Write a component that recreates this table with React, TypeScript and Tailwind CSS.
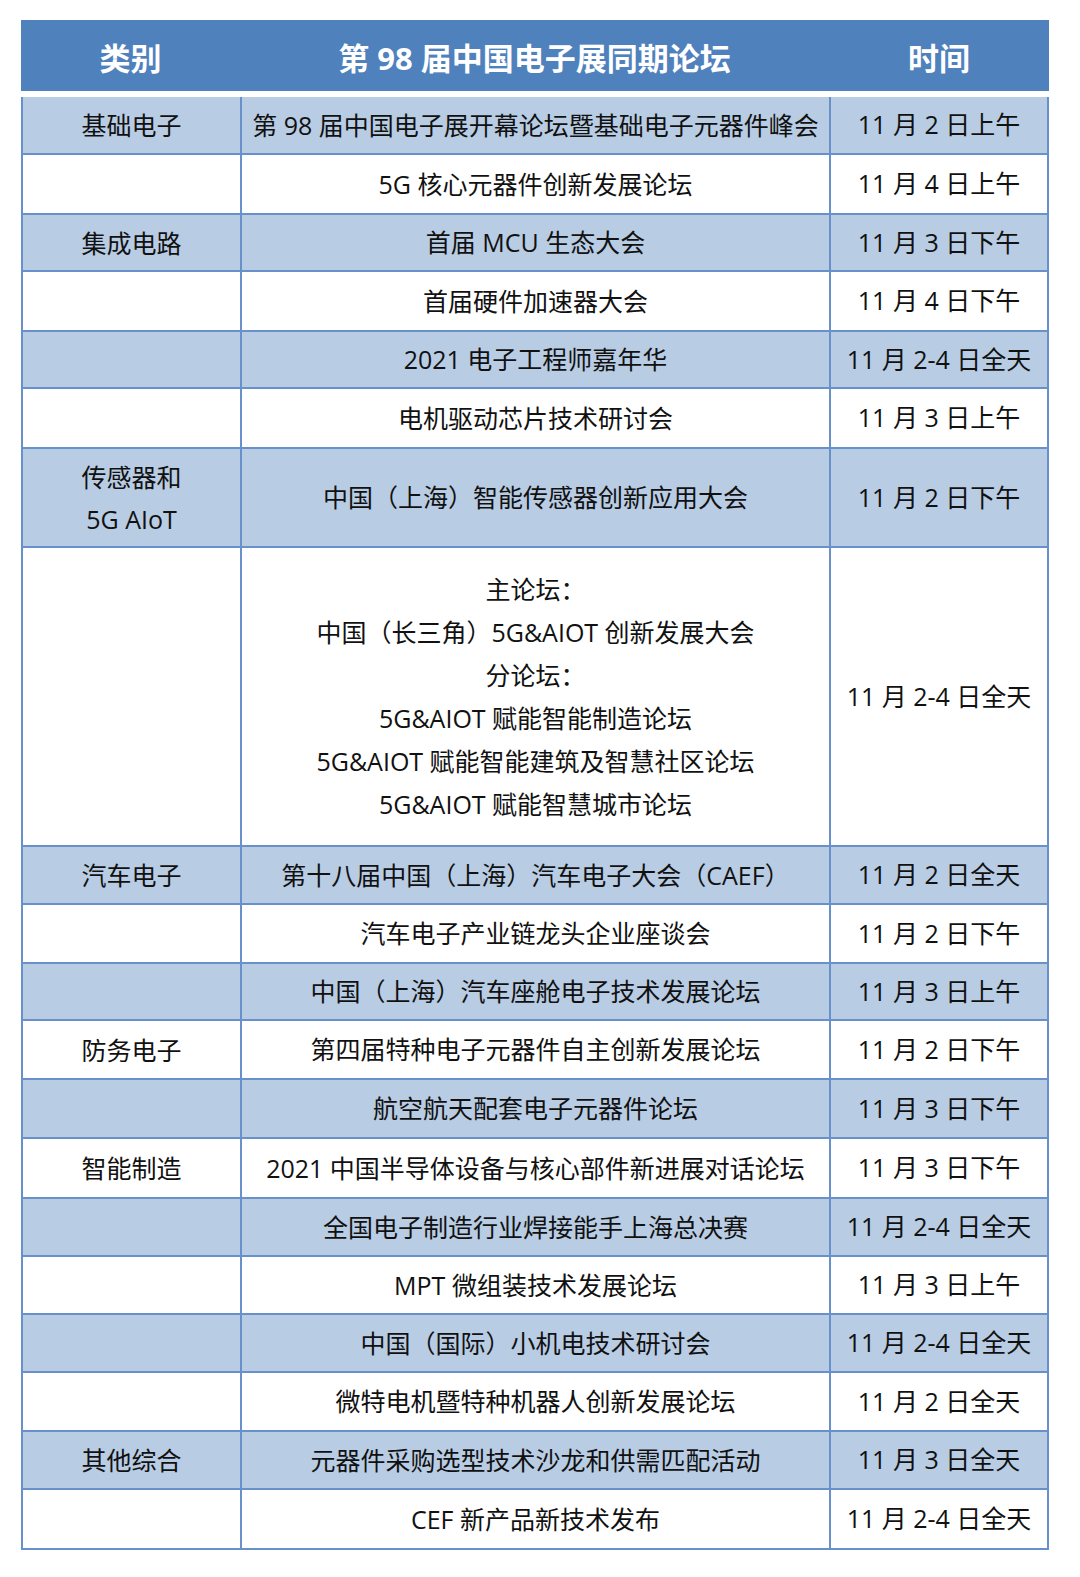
const rows: { cat?: string[]; forum: string[]; time: string; h: number }[] = [
  { cat: ["基础电子"], forum: ["第 98 届中国电子展开幕论坛暨基础电子元器件峰会"], time: "11 月 2 日上午", h: 56 },
  { forum: ["5G 核心元器件创新发展论坛"], time: "11 月 4 日上午", h: 60 },
  { cat: ["集成电路"], forum: ["首届 MCU 生态大会"], time: "11 月 3 日下午", h: 57 },
  { forum: ["首届硬件加速器大会"], time: "11 月 4 日下午", h: 60 },
  { forum: ["2021 电子工程师嘉年华"], time: "11 月 2-4 日全天", h: 57 },
  { forum: ["电机驱动芯片技术研讨会"], time: "11 月 3 日上午", h: 60 },
  { cat: ["传感器和", "5G AIoT"], forum: ["中国（上海）智能传感器创新应用大会"], time: "11 月 2 日下午", h: 99 },
  {
    forum: [
      "主论坛：",
      "中国（长三角）5G&AIOT 创新发展大会",
      "分论坛：",
      "5G&AIOT 赋能智能制造论坛",
      "5G&AIOT 赋能智能建筑及智慧社区论坛",
      "5G&AIOT 赋能智慧城市论坛",
    ],
    time: "11 月 2-4 日全天",
    h: 299,
  },
  { cat: ["汽车电子"], forum: ["第十八届中国（上海）汽车电子大会（CAEF）"], time: "11 月 2 日全天", h: 58 },
  { forum: ["汽车电子产业链龙头企业座谈会"], time: "11 月 2 日下午", h: 59 },
  { forum: ["中国（上海）汽车座舱电子技术发展论坛"], time: "11 月 3 日上午", h: 57 },
  { cat: ["防务电子"], forum: ["第四届特种电子元器件自主创新发展论坛"], time: "11 月 2 日下午", h: 59 },
  { forum: ["航空航天配套电子元器件论坛"], time: "11 月 3 日下午", h: 59 },
  { cat: ["智能制造"], forum: ["2021 中国半导体设备与核心部件新进展对话论坛"], time: "11 月 3 日下午", h: 60 },
  { forum: ["全国电子制造行业焊接能手上海总决赛"], time: "11 月 2-4 日全天", h: 58 },
  { forum: ["MPT 微组装技术发展论坛"], time: "11 月 3 日上午", h: 58 },
  { forum: ["中国（国际）小机电技术研讨会"], time: "11 月 2-4 日全天", h: 58 },
  { forum: ["微特电机暨特种机器人创新发展论坛"], time: "11 月 2 日全天", h: 59 },
  { cat: ["其他综合"], forum: ["元器件采购选型技术沙龙和供需匹配活动"], time: "11 月 3 日全天", h: 58 },
  { forum: ["CEF 新产品新技术发布"], time: "11 月 2-4 日全天", h: 60 },
];

export default function App() {
  return (
    <div
      className="w-full bg-white pt-[20px] pl-[21px] overflow-hidden"
      style={{ fontFamily: '"Open Sans", "Noto Sans CJK SC", sans-serif' }}
    >
      <div className="w-[1028px] border-b-2 border-[#6891cc]">
        <div className="flex h-[71px] pt-[5px] bg-[#4f81bd] text-white font-bold text-[31px]">
          <div className="w-[219px] flex items-center justify-center">类别</div>
          <div className="w-[589px] flex items-center justify-center whitespace-nowrap">第 98 届中国电子展同期论坛</div>
          <div className="flex-1 flex items-center justify-center">时间</div>
        </div>
        <div className="h-[6px] bg-white" />
        {rows.map((r, i) => (
          <div
            key={i}
            className={`flex border-l-2 border-r-2 border-[#6891cc] text-[#111] text-[25px] ${i > 0 ? "border-t-2" : ""} ${i % 2 === 0 ? "bg-[#b8cce4]" : "bg-white"}`}
            style={{ height: r.h }}
          >
            <div className="w-[217px] flex flex-col items-center justify-center leading-[42px]">
              {r.cat?.map((c) => <div key={c}>{c}</div>)}
            </div>
            <div className="w-[591px] border-l-2 border-r-2 border-[#6891cc] flex flex-col items-center justify-center leading-[43px] whitespace-nowrap">
              {r.forum.map((f) => <div key={f}>{f}</div>)}
            </div>
            <div className="flex-1 min-w-0 flex items-center justify-center whitespace-nowrap">{r.time}</div>
          </div>
        ))}
      </div>
    </div>
  );
}
